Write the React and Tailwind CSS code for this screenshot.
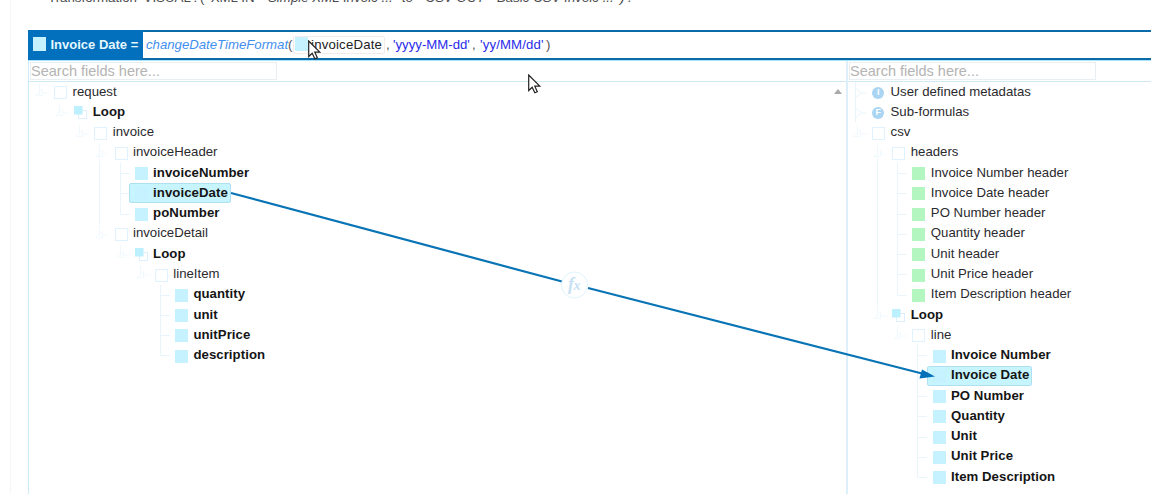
import React from 'react';

const LEFT = [
  { t: 'request', i: 'box', g: ['open'] },
  { t: 'Loop', i: 'loop', b: 1, g: ['', 'open'] },
  { t: 'invoice', i: 'box', g: ['', '', 'open'] },
  { t: 'invoiceHeader', i: 'box', g: ['', '', '', 'openMid'] },
  { t: 'invoiceNumber', i: 'cyan', b: 1, g: ['', '', '', 'line', 'mid'] },
  { t: 'invoiceDate', i: 'cyan', b: 1, hi: 1, g: ['', '', '', 'line', 'mid'] },
  { t: 'poNumber', i: 'cyan', b: 1, g: ['', '', '', 'line', 'end'] },
  { t: 'invoiceDetail', i: 'box', g: ['', '', '', 'open'] },
  { t: 'Loop', i: 'loop', b: 1, g: ['', '', '', '', 'open'] },
  { t: 'lineItem', i: 'box', g: ['', '', '', '', '', 'open'] },
  { t: 'quantity', i: 'cyan', b: 1, g: ['', '', '', '', '', '', 'mid'] },
  { t: 'unit', i: 'cyan', b: 1, g: ['', '', '', '', '', '', 'mid'] },
  { t: 'unitPrice', i: 'cyan', b: 1, g: ['', '', '', '', '', '', 'mid'] },
  { t: 'description', i: 'cyan', b: 1, g: ['', '', '', '', '', '', 'end'] },
];

const RIGHT = [
  { t: 'User defined metadatas', i: 'info', g: ['closed'] },
  { t: 'Sub-formulas', i: 'formula', g: ['closed'] },
  { t: 'csv', i: 'box', g: ['open'] },
  { t: 'headers', i: 'box', g: ['', 'openMid'] },
  { t: 'Invoice Number header', i: 'green', g: ['', 'line', 'mid'] },
  { t: 'Invoice Date header', i: 'green', g: ['', 'line', 'mid'] },
  { t: 'PO Number header', i: 'green', g: ['', 'line', 'mid'] },
  { t: 'Quantity header', i: 'green', g: ['', 'line', 'mid'] },
  { t: 'Unit header', i: 'green', g: ['', 'line', 'mid'] },
  { t: 'Unit Price header', i: 'green', g: ['', 'line', 'mid'] },
  { t: 'Item Description header', i: 'green', g: ['', 'line', 'end'] },
  { t: 'Loop', i: 'loop', b: 1, g: ['', 'open'] },
  { t: 'line', i: 'box', g: ['', '', 'open'] },
  { t: 'Invoice Number', i: 'cyan', b: 1, g: ['', '', '', 'mid'] },
  { t: 'Invoice Date', i: 'cyan', b: 1, hi: 1, g: ['', '', '', 'mid'] },
  { t: 'PO Number', i: 'cyan', b: 1, g: ['', '', '', 'mid'] },
  { t: 'Quantity', i: 'cyan', b: 1, g: ['', '', '', 'mid'] },
  { t: 'Unit', i: 'cyan', b: 1, g: ['', '', '', 'mid'] },
  { t: 'Unit Price', i: 'cyan', b: 1, g: ['', '', '', 'mid'] },
  { t: 'Item Description', i: 'cyan', b: 1, g: ['', '', '', 'end'] },
];

const GUIDES = {
  line: 'M5.5 0V20.3',
  mid: 'M5.5 0V20.3M6 10.5H15',
  end: 'M5.5 0V10.5H15',
  open: 'M5.5 1V12M2 13.5L8.5 7V13.5ZM9 11H15',
  openMid: 'M5.5 0V20.3M2 13.5L8.5 7V13.5ZM9 11H12',
  closed: 'M3.5 0V20.3M3.5 6L9.5 11L3.5 15.5M10 11H15',
};

function Guide({ kind }) {
  return (
    <svg className="h-[20.27px] w-[20.15px] shrink-0" viewBox="0 0 20.15 20.27" fill="none" stroke={kind.startsWith('open') ? '#f0f9fe' : '#e8f5fc'}>
      {kind && <path d={GUIDES[kind]} />}
    </svg>
  );
}

function Icon({ kind }) {
  if (kind === 'box') return <span className="mt-px h-[13px] w-[13px] border border-[#e0f2fd] bg-white" />;
  if (kind === 'cyan') return <span className="mt-px h-[13px] w-[13px] bg-[#c6f2ff]" />;
  if (kind === 'green') return <span className="mt-px h-[13px] w-[13px] bg-[#b3f6bf]" />;
  if (kind === 'loop')
    return (
      <svg className="mt-px h-[13px] w-[13px]" viewBox="0 0 13 13">
        <rect x="4.5" y="4.5" width="8" height="8" fill="#fff" stroke="#dceffb" />
        <rect width="8.5" height="8.5" fill="#bdf0ff" />
      </svg>
    );
  return (
    <span className="mt-px flex h-[12px] w-[12px] items-center justify-center rounded-full bg-[#a9d5f2] text-[9px] leading-none font-bold text-white">
      {kind === 'info' ? 'I' : 'F'}
    </span>
  );
}

function Row({ row }) {
  return (
    <div className="flex h-[20.27px] items-center">
      {row.g.map((kind, n) => <Guide key={n} kind={kind} />)}
      <div
        className={
          row.hi
            ? '-mt-[0.5px] -ml-[5.5px] flex h-[20px] items-center rounded-[2px] border border-[#aee0f2] bg-[#c6f5ff] pr-[2px] pl-[4.5px]'
            : 'flex h-[20px] items-center'
        }
      >
        <span className="flex w-[18.4px] shrink-0"><Icon kind={row.i} /></span>
        <span
          className={
            row.b
              ? '-mt-px text-[13.2px] leading-[20px] font-bold tracking-[0.06px] whitespace-nowrap text-[#151515]'
              : '-mt-px text-[13.2px] leading-[20px] tracking-[0.02px] whitespace-nowrap text-[#2a2a2e]'
          }
        >
          {row.t}
        </span>
      </div>
    </div>
  );
}

function Search() {
  return (
    <div className="flex h-[21px] shrink-0 border-b border-[#cfe9f7] pt-px pl-px">
      <div className="h-[18px] w-[247px] border border-[#e8eef2] text-[14.5px] leading-[16px] text-[#b4b4b4]">
        Search fields here...
      </div>
    </div>
  );
}

function Cursor() {
  return (
    <svg className="h-[20px] w-[13px]" viewBox="0 0 13 20">
      <path d="M.7 1V16.5L4.2 13.2L6.8 18.8L9.3 17.7L6.8 12.2H11.8Z" fill="#fff" stroke="#222" strokeWidth="1.2" />
    </svg>
  );
}

export default function App() {
  return (
    <div className="relative flex h-[494px] w-[1151px] overflow-hidden bg-white font-['Liberation_Sans',Arial,sans-serif]">
      <div className="w-[11px] shrink-0 border-r border-[#f4f7f9]" />
      <div className="flex min-w-0 flex-1 flex-col pl-[17px]">
        <div className="h-[30px] shrink-0 overflow-hidden">
          <div className="-mt-[9px] flex pl-[20px] text-[13.3px] leading-[14px] whitespace-nowrap text-[#4b4b50]">
            <span className="w-[93px]">Transformation</span>
            <span className="w-[59px]">'VISUAL'.</span>
            <span className="w-[68px]">( 'XML IN -</span>
            <span className="w-[134px] italic">Simple XML Invoic ...'</span>
            <span className="w-[21px] italic">to</span>
            <span className="w-[74px] italic">'CSV OUT -</span>
            <span className="italic">Basic CSV Invoic ...' ) .</span>
          </div>
        </div>
        <div className="flex h-[30px] shrink-0 border-y-2 border-[#0a6ba8] bg-white">
          <div className="-my-[2px] flex w-[115px] shrink-0 items-center bg-[#0270bc] pl-[5px]">
            <span className="-mt-[2px] h-[14px] w-[13px] bg-[#c6f2ff]" />
            <span className="ml-[4.5px] text-[13px] font-bold whitespace-nowrap text-[#e4f7ff]">Invoice Date =</span>
          </div>
          <div className="flex items-center pl-[3px] text-[13.2px] whitespace-nowrap text-[#555]">
            <span className="w-[142px] text-[#3f8fee] italic">changeDateTimeFormat</span>
            <span className="w-[5px]">(</span>
            <span className="flex h-[18px] w-[92px] items-center rounded-[2px] border border-[#f3ebe8] pl-px">
              <span className="-mt-[2px] h-[14px] w-[13px] bg-[#c6f2ff]" />
              <span className="ml-[3px] tracking-[0.2px] text-[#222]">invoiceDate</span>
            </span>
            <span className="w-[8px] pl-px">,</span>
            <span className="w-[79px] text-[#2b2bea]">'yyyy-MM-dd'</span>
            <span className="w-[8px]">,</span>
            <span className="w-[65px] tracking-[0.15px] text-[#2b2bea]">'yy/MM/dd'</span>
            <span className="pl-px">)</span>
          </div>
        </div>
        <div className="flex min-h-0 flex-1 border-t border-[#a9e4fb]">
          <div className="flex w-[818px] shrink-0 flex-col border-l border-[#cdeaf8]">
            <Search />
            <div className="flex justify-between pl-[5px]">
              <div>{LEFT.map((row, n) => <Row key={n} row={row} />)}</div>
              <svg className="mt-[7px] mr-[4px] h-[5px] w-[8px]" viewBox="0 0 8 5"><path d="M4 0L8 5H0Z" fill="#aaa" /></svg>
            </div>
          </div>
          <div className="flex min-w-0 flex-1 flex-col border-l-2 border-[#dceffb]">
            <Search />
            <div className="pl-[4px]">{RIGHT.map((row, n) => <Row key={n} row={row} />)}</div>
          </div>
        </div>
      </div>
      <svg className="pointer-events-none absolute inset-0 h-[494px] w-[1151px]" viewBox="0 0 1151 494">
        <path d="M231 193L562 281.5M588 288L922 373.5" stroke="#0874b5" strokeWidth="2.2" fill="none" />
        <path d="M935 376.5L919.5 378.5L922 369.5Z" fill="#0270b8" />
        <circle cx="574.5" cy="285" r="13" fill="#fff" stroke="#e0f4fc" />
        <text x="568" y="290" fontFamily="Liberation Serif, serif" fontSize="18" fontStyle="italic" fontWeight="bold" fill="#c7e1f3">f</text>
        <text x="573.5" y="290" fontFamily="Liberation Serif, serif" fontSize="14" fontStyle="italic" fontWeight="bold" fill="#c7e1f3">x</text>
      </svg>
      <div className="absolute top-[40px] left-[308px]"><Cursor /></div>
      <div className="absolute top-[74px] left-[528px]"><Cursor /></div>
    </div>
  );
}
